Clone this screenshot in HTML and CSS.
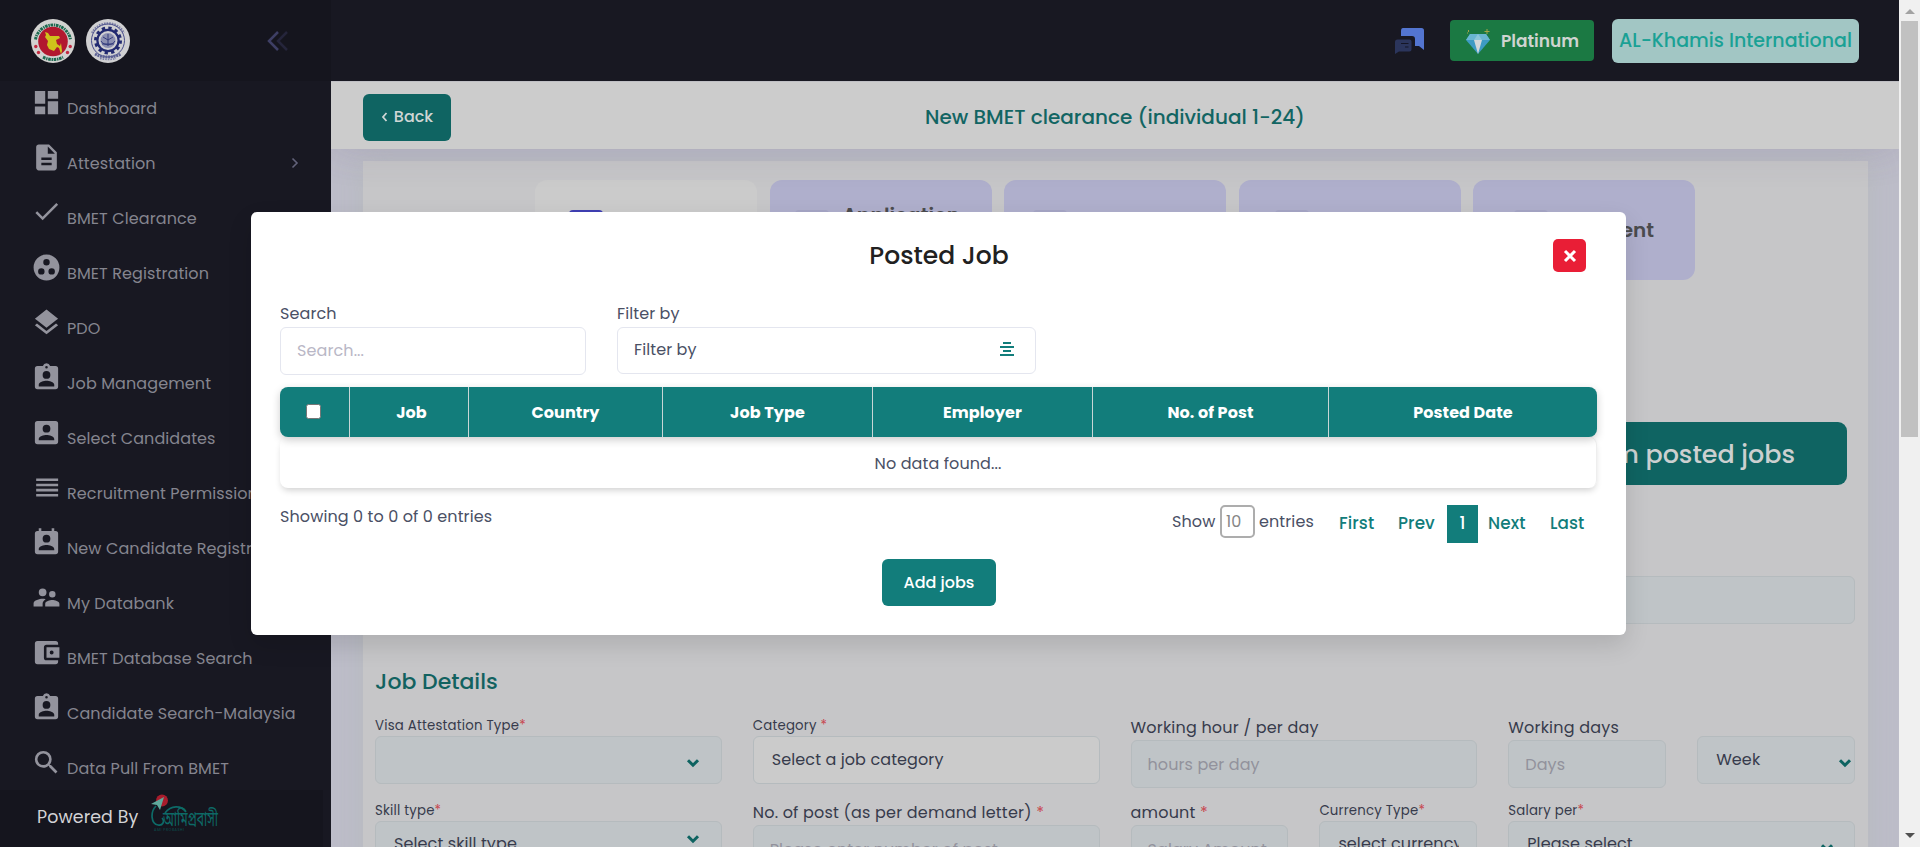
FILE: index.html
```html
<!DOCTYPE html>
<html lang="en">
<head>
<meta charset="utf-8">
<title>New BMET clearance</title>
<link rel="stylesheet" href="styles.css">
</head>
<body>
<svg width="0" height="0" class="defs">
  <symbol id="i-dash" viewBox="0 0 24 24"><path d="M3 13h8V3H3v10zm0 8h8v-6H3v6zm10 0h8V11h-8v10zm0-18v6h8V3h-8z"/></symbol>
  <symbol id="i-doc" viewBox="0 0 24 24"><path d="M14 2H6c-1.1 0-2 .9-2 2v16c0 1.100.9 2 2 2h12c1.100 0 2-.9 2-2V8l-6-6zm2 16H8v-2h8v2zm0-4H8v-2h8v2zm-3-5V3.500L18.500 9H13z"/></symbol>
  <symbol id="i-check" viewBox="0 0 24 24"><path d="M9 16.200L4.800 12l-1.400 1.400L9 19 21 7l-1.400-1.400L9 16.200z" transform="translate(0 -1)"/></symbol>
  <symbol id="i-group" viewBox="0 0 24 24"><path fill-rule="evenodd" d="M12 2a10 10 0 1 0 0 20 10 10 0 0 0 0-20zM8 17.500a2.500 2.500 0 1 1 0-5 2.500 2.500 0 0 1 0 5zM9.500 8a2.500 2.500 0 1 1 5 0 2.500 2.500 0 0 1-5 0zm6.500 9.500a2.500 2.500 0 1 1 0-5 2.500 2.500 0 0 1 0 5z"/></symbol>
  <symbol id="i-layers" viewBox="0 0 24 24"><path d="M11.990 18.540l-7.370-5.730L3 14.070l9 7 9-7-1.630-1.270-7.380 5.740zM12 16l7.360-5.730L21 9l-9-7-9 7 1.630 1.270L12 16z"/></symbol>
  <symbol id="i-badge" viewBox="0 0 24 24"><path fill-rule="evenodd" d="M19 3h-4.180a3 3 0 0 0-5.640 0H5a2 2 0 0 0-2 2v14a2 2 0 0 0 2 2h14a2 2 0 0 0 2-2V5a2 2 0 0 0-2-2zm-7 0a1 1 0 1 1 0 2 1 1 0 0 1 0-2zm0 4a3 3 0 1 1 0 6 3 3 0 0 1 0-6zm6 12H6v-1.400c0-2 4-3.100 6-3.100s6 1.100 6 3.100V19z"/></symbol>
  <symbol id="i-box" viewBox="0 0 24 24"><path fill-rule="evenodd" d="M5 3a2 2 0 0 0-2 2v14a2 2 0 0 0 2 2h14a2 2 0 0 0 2-2V5a2 2 0 0 0-2-2H5zm7 3a3 3 0 1 1 0 6 3 3 0 0 1 0-6zm6 12H6v-1c0-2 4-3.100 6-3.100s6 1.100 6 3.100v1z"/></symbol>
  <symbol id="i-lines" viewBox="0 0 24 24"><path d="M4 15h17v-2H4v2zm0 4h17v-2H4v2zm0-8h17V9H4v2zm0-6v2h17V5H4z"/></symbol>
  <symbol id="i-cal" viewBox="0 0 24 24"><path fill-rule="evenodd" d="M19 3h-1V1h-2v2H8V1H6v2H5a2 2 0 0 0-2 2v14a2 2 0 0 0 2 2h14a2 2 0 0 0 2-2V5a2 2 0 0 0-2-2zm-7 3a3 3 0 1 1 0 6 3 3 0 0 1 0-6zm6 12H6v-1c0-2 4-3.100 6-3.100s6 1.100 6 3.100v1z"/></symbol>
  <symbol id="i-people" viewBox="0 0 24 24"><path d="M16.500 12a2.500 2.500 0 1 0 0-5 2.500 2.500 0 0 0 0 5zM9 11a3 3 0 1 0 0-6 3 3 0 0 0 0 6zm7.500 3c-1.830 0-5.500.92-5.500 2.750V19h11v-2.250c0-1.830-3.670-2.750-5.500-2.750zM9 13c-2.330 0-7 1.170-7 3.500V19h7v-2.250c0-.85.33-2.340 2.370-3.470C10.500 13.100 9.660 13 9 13z"/></symbol>
  <symbol id="i-wallet" viewBox="0 0 24 24"><path fill-rule="evenodd" d="M21 18v1a2 2 0 0 1-2 2H5a2 2 0 0 1-2-2V5a2 2 0 0 1 2-2h14a2 2 0 0 1 2 2v1h-9a2 2 0 0 0-2 2v8a2 2 0 0 0 2 2h9zm-9-2h10V8H12v8zm4-2.500a1.500 1.500 0 1 1 0-3 1.500 1.500 0 0 1 0 3z"/></symbol>
  <symbol id="i-search" viewBox="0 0 24 24"><path d="M15.500 14h-.79l-.28-.27A6.470 6.470 0 0 0 16 9.500 6.500 6.500 0 1 0 9.500 16c1.610 0 3.090-.59 4.230-1.570l.27.28v.79l5 4.990L20.490 19l-4.990-5zm-6 0a4.500 4.500 0 1 1 0-9 4.500 4.500 0 0 1 0 9z"/></symbol>
  <symbol id="i-chev" viewBox="0 0 14 10"><path d="M2 2.200l5 5 5-5" fill="none" stroke="#0e6361" stroke-width="3"/></symbol>
</svg>

<div class="app">
  <aside class="side">
    <div class="brand">
      <svg class="seal" viewBox="0 0 44 44">
        <circle cx="22" cy="22" r="22" fill="#d2d2d0"/>
        <path d="M4.500 20.500A17.800 17.800 0 0 1 39.500 20.500" fill="none" stroke="#1c6a50" stroke-width="3" stroke-dasharray="2.600 .8 1.400 .7"/>
        <path d="M12 38.200Q22 43 32 38.200" fill="none" stroke="#1c6a50" stroke-width="3" stroke-dasharray="2.600 .8 1.400 .7"/>
        <circle cx="22" cy="22.500" r="14.800" fill="#b2182f"/>
        <path d="M14 13l3 1 2 3h9l1 2-4 2 1 4 3 2 1-3 1 8-1 3-2-6-2-1-3 4-5-2-2-4 1-4-3-4 1-2z" fill="#cfc31b"/>
        <g fill="#c22a40"><circle cx="4.800" cy="27.500" r="1.700"/><circle cx="7.500" cy="33.500" r="1.700"/><circle cx="39.200" cy="27.500" r="1.700"/><circle cx="36.500" cy="33.500" r="1.700"/></g>
      </svg>
      <svg class="seal" viewBox="0 0 44 44">
        <circle cx="22" cy="22" r="22" fill="#d0d0d2"/>
        <path d="M6 14A18 18 0 0 1 38 14" fill="none" stroke="#7b7fa6" stroke-width="2.200" stroke-dasharray="1.600 1"/>
        <circle cx="22" cy="21.500" r="16.500" fill="none" stroke="#474c8a" stroke-width="1"/>
        <circle cx="22" cy="21.500" r="12.500" fill="none" stroke="#222a70" stroke-width="3" stroke-dasharray="3.270 3.270"/>
        <circle cx="22" cy="21.500" r="10.600" fill="none" stroke="#222a70" stroke-width="2.200"/>
        <circle cx="22" cy="21.500" r="7.500" fill="#8c90b2"/>
        <path d="M15 22c3 5 11 5 14 0M17 18l5 3 5-3M22 15v12M16 25h12" fill="none" stroke="#343c7c" stroke-width="1"/>
        <path d="M9 35c8 4 18 4 26 0" fill="none" stroke="#5b6094" stroke-width="3" stroke-dasharray="2 .7"/>
        <path d="M14 39.500q8 2 16 0" fill="none" stroke="#7b7fa6" stroke-width="1.500" stroke-dasharray="1.600 1"/>
      </svg>
      <svg class="collapse" viewBox="0 0 22 20"><path d="M11 1L2 10l9 9" fill="none" stroke="#3e3f65" stroke-width="2.500"/><path d="M20 1l-9 9 9 9" fill="none" stroke="#25253b" stroke-width="2.500"/></svg>
    </div>
    <nav class="nav">
      <a class="item"><svg><use href="#i-dash"/></svg><span>Dashboard</span></a>
      <a class="item"><svg><use href="#i-doc"/></svg><span>Attestation</span><svg class="more" viewBox="0 0 8 12"><path d="M1.500 1.500L6 6l-4.500 4.500" fill="none" stroke="#62627a" stroke-width="1.600"/></svg></a>
      <a class="item"><svg><use href="#i-check"/></svg><span>BMET Clearance</span></a>
      <a class="item"><svg><use href="#i-group"/></svg><span>BMET Registration</span></a>
      <a class="item"><svg><use href="#i-layers"/></svg><span>PDO</span></a>
      <a class="item"><svg><use href="#i-badge"/></svg><span>Job Management</span></a>
      <a class="item"><svg><use href="#i-box"/></svg><span>Select Candidates</span></a>
      <a class="item"><svg><use href="#i-lines"/></svg><span>Recruitment Permission</span></a>
      <a class="item"><svg><use href="#i-cal"/></svg><span>New Candidate Registration</span></a>
      <a class="item"><svg><use href="#i-people"/></svg><span>My Databank</span></a>
      <a class="item"><svg><use href="#i-wallet"/></svg><span>BMET Database Search</span></a>
      <a class="item"><svg><use href="#i-badge"/></svg><span>Candidate Search-Malaysia</span></a>
      <a class="item"><svg><use href="#i-search"/></svg><span>Data Pull From BMET</span></a>
    </nav>
    <footer class="powered">
      <span>Powered By</span>
      <svg class="probashi" viewBox="0 0 68 40">
        <circle cx="11" cy="7.500" r="6" fill="#a81c2c"/>
        <path d="M0 11l13-7-4 13-3-5z" fill="#5fa99b"/>
        <path d="M5 13C-1 19 0 31 7 32c5 1 7-4 4-7M14 20c6-8 16-8 21-1" fill="none" stroke="#0d6a67" stroke-width="1.700"/>
        <text x="12" y="33" class="bn" textLength="55" lengthAdjust="spacingAndGlyphs">আমিপ্রবাসী</text>
        <text x="3" y="37.500" class="bn-sub" textLength="30">AMI PROBASHI</text>
      </svg>
    </footer>
  </aside>

  <div class="page">
    <header class="top">
      <svg class="chat" viewBox="0 0 29 26"><path d="M8 0h18.500Q29 0 29 2.500V22l-5-4h-4V11q0-3-3-3H6V3q0-3 2-3z" fill="#5375d0"/><path d="M2.500 11.500h12q2 0 2 2v8q0 2-2 2H4L0 26V14q0-2.500 2.500-2.500z" fill="#2b355c"/><path d="M6 15.500h7.500M10 19h3.500" stroke="#151626" stroke-width="1.200"/></svg>
      <button class="plat"><svg viewBox="0 0 26 26"><path d="M5 5h16l4 6-12 14L1 11z" fill="#3e9bc4"/><path d="M5 5h16l4 6H1z" fill="#69b6d2"/><path d="M9 11h8l-4 14z" fill="#d3d8da"/><path d="M9 11l4-6 4 6z" fill="#8cc6da"/><path d="M22 0v5M19.500 2.500h5M3.500 1v2M2 4h1" stroke="#a5a44a" stroke-width="1"/></svg><span>Platinum</span></button>
      <button class="agency">AL-Khamis International</button>
    </header>
    <div class="sub">
      <button class="back"><svg viewBox="0 0 7 10"><path d="M5.500 1L2 5l3.500 4" fill="none" stroke="#cfd6d5" stroke-width="1.800"/></svg><span>Back</span></button>
      <h1>New BMET clearance (individual 1-24)</h1>
    </div>
    <div class="body">
      <section class="card">
        <div class="steps">
          <div class="step on s1"><i></i></div>
          <div class="step s2"><i></i><b>Application</b></div>
          <div class="step s3"><i></i></div>
          <div class="step s4"><i></i></div>
          <div class="step s5"><i></i><b>Payment</b></div>
        </div>
        <button class="choose">Select from posted jobs</button>
        <div class="wide"></div>
        <h2>Job Details</h2>
        <div class="form">
          <div class="f"><label class="sm">Visa Attestation Type<em>*</em></label><div class="inp"><svg class="cv"><use href="#i-chev"/></svg></div></div>
          <div class="f"><label class="sm">Category <em>*</em></label><div class="inp white">Select a job category</div></div>
          <div class="f"><label>Working hour / per day</label><div class="inp ph">hours per day</div></div>
          <div class="pair">
            <div class="f"><label>Working days</label><div class="inp ph">Days</div></div>
            <div class="f nolabel"><div class="inp">Week<svg class="cv tight"><use href="#i-chev"/></svg></div></div>
          </div>
          <div class="f"><label class="sm">Skill type<em>*</em></label><div class="inp low">Select skill type<svg class="cv up"><use href="#i-chev"/></svg></div></div>
          <div class="f"><label>No. of post (as per demand letter) <em>*</em></label><div class="inp ph">Please enter number of post</div></div>
          <div class="pair">
            <div class="f"><label>amount <em>*</em></label><div class="inp ph">Salary Amount</div></div>
            <div class="f"><label class="sm">Currency Type<em>*</em></label><div class="inp low"><span class="clip">select currency</span></div></div>
          </div>
          <div class="f"><label class="sm">Salary per<em>*</em></label><div class="inp low">Please select<svg class="cv down"><use href="#i-chev"/></svg></div></div>
        </div>
      </section>
    </div>
  </div>

  <div class="scroll"><span class="arr-up"></span><span class="thumb"></span><span class="arr-dn"></span></div>
</div>

<div class="modal">
  <div class="m-head"><h3>Posted Job</h3><button class="close"><svg viewBox="0 0 14 14"><path d="M2 2l10 10M12 2L2 12" stroke="#fff" stroke-width="3"/></svg></button></div>
  <div class="filters">
    <div class="col-a"><label>Search</label><div class="box search">Search...</div></div>
    <div class="col-b"><label>Filter by</label><div class="box">Filter by<svg class="bars" viewBox="0 0 14 14"><path d="M3 1h8M0 5h14M3 9h8M0 13h14" stroke="#127d7b" stroke-width="2"/></svg></div></div>
  </div>
  <div class="t-head"><span><i class="cb"></i></span><span class="job">Job</span><span>Country</span><span>Job Type</span><span>Employer</span><span>No. of Post</span><span>Posted Date</span></div>
  <div class="t-row">No data found...</div>
  <div class="t-foot">
    <span class="showing">Showing 0 to 0 of 0 entries</span>
    <div class="pager">
      <span>Show</span><span class="num">10</span><span class="ent">entries</span>
      <a class="p-first">First</a><a class="p-prev">Prev</a><a class="cur">1</a><a class="p-next">Next</a><a class="p-last">Last</a>
    </div>
  </div>
  <button class="add">Add jobs</button>
</div>
</body>
</html>
```
FILE: styles.css
```css
* { box-sizing: border-box; }
body { margin: 0; height: 847px; overflow: hidden; font: 16px/24px Poppins, Inter, "Open Sans", sans-serif; letter-spacing: .1px; color: #4a5065; }
button { border: 0; padding: 0; font: inherit; display: flex; align-items: center; justify-content: center; white-space: nowrap; }
h1, h2, h3 { margin: 0; font-weight: 500; white-space: nowrap; letter-spacing: 0; }
svg { display: block; flex: none; }
.defs { position: absolute; }
.app { display: grid; grid-template-columns: 331px 1568px 21px; height: 847px; overflow: hidden; }

.side { background: #181822; display: flex; flex-direction: column; height: 847px; }
.brand { height: 81px; flex: none; background: #15151e; display: flex; align-items: center; padding: 0 42px 0 31px; gap: 11px; }
.seal { width: 44px; height: 44px; }
.collapse { width: 22px; height: 20px; margin-left: auto; }
.nav { flex: 1; min-height: 0; overflow: hidden; }
.item { display: flex; align-items: flex-start; height: 55px; padding: 6px 0 0 31px; color: #85858f; white-space: nowrap; }
.item svg { width: 31px; height: 31px; fill: #93939d; }
.item span { margin: 10px 0 0 5px; }
.item svg.more { width: 8px; height: 12px; fill: none; margin: 15px 32px 0 auto; }
.powered { height: 57px; width: 323px; flex: none; background: #15151e; display: flex; padding-left: 37px; color: #d3d3d6; font-size: 17.400px; }
.powered span { padding-top: 15px; width: 102px; white-space: nowrap; }
.probashi { width: 68px; height: 40px; margin: 3px 0 0 12px; }
.bn { font-size: 20px; fill: #0d6a67; letter-spacing: 0; font-family: "Noto Sans Bengali", "Noto Sans", sans-serif; }
.bn-sub { font-size: 3.500px; fill: #0b504f; }

.page { display: flex; flex-direction: column; height: 847px; overflow: hidden; }
.top { height: 81px; flex: none; background: #181822; display: flex; align-items: center; justify-content: flex-end; padding-right: 40px; position: relative; z-index: 2; }
.chat { width: 29px; height: 26px; margin-right: 26px; }
.plat { width: 144px; height: 41px; border-radius: 4px; background: #1b7943; color: #cfd4d0; font-weight: 600; font-size: 17px; gap: 10px; margin-right: 18px; }
.plat svg { width: 26px; height: 26px; margin-top: 2px; }
.agency { width: 247px; height: 44px; border-radius: 6px; background: #a2c6c4; color: #1aa195; font-size: 19px; font-weight: 500; }
.sub { height: 68px; flex: none; background: #ccc; border-top: 1px solid #bfbfc4; display: flex; align-items: center; padding: 4px 32px 0; position: relative; box-shadow: 0 0 40px rgba(82, 63, 105, .16); }
.back { width: 88px; height: 47px; margin-top: -1px; border-radius: 6px; background: #0f6462; color: #cfd6d5; font-weight: 500; gap: 6px; }
.back svg { width: 7px; height: 10px; }
.sub h1 { flex: 1; text-align: center; padding: 0 88px 2px 0; font-size: 20px; color: #126563; }
.body { flex: 1; min-height: 0; padding: 12px 31px 0 32px; background: #bdbdc9; }
.card { height: 900px; background: #c6c6c8; padding: 19px 13px 0 12px; box-shadow: 0 0 26px rgba(178, 186, 180, .5); }
.steps { display: grid; grid-template-columns: repeat(5, 222px); gap: 12.500px; justify-content: center; }
.step { height: 100px; border-radius: 12px; background: #afafcc; display: flex; align-items: center; gap: 14px; padding-left: 36px; color: #4b4b4e; font-size: 20px; line-height: 30px; letter-spacing: 0; }
.step.on { background: #cbcbcb; }
.step i { width: 34px; height: 40px; border-radius: 4px; background: #a6a6c5; }
.step.on i { background: #4040b4; }
.step b { font-weight: 600; }
.s1 { padding-left: 34px; }
.s2 { padding-left: 25px; }
.s2 b { align-self: flex-start; padding-top: 20px; }
.s3 { padding-left: 29px; }
.s5 { padding-left: 41px; }
.choose { height: 63px; width: 420px; margin: 142px 8px 0 auto; justify-content: flex-end; padding-right: 52px; border-radius: 9px; background: #0f6462; color: #ccd0d0; font-size: 25.400px; letter-spacing: 0; font-weight: 500; }
.wide { height: 48px; margin-top: 91px; border: 1px solid #b5bbbe; border-radius: 6px; background: #bfc4c7; }
.card h2 { margin: 43px 0 17px; font-size: 22px; line-height: 30px; color: #126260; }
.form { display: grid; grid-template-columns: repeat(4, 1fr); gap: 11px 31px; color: #373b4c; }
.pair { display: grid; grid-template-columns: 1fr 1fr; gap: 31px; }
.f { min-width: 0; }
.f label { display: block; height: 26px; line-height: 27px; white-space: nowrap; letter-spacing: .2px; }
.f label.sm { height: 22px; line-height: 23px; font-size: 13.300px; }
.f em { color: #c8474f; font-style: normal; }
.nolabel { padding-top: 22px; }
.inp { height: 48px; border: 1px solid #b5bbbe; border-radius: 6px; background: #bfc4c7; padding: 0 17px 0 18px; line-height: 46px; display: flex; white-space: nowrap; }
.inp.white { background: #cbcbcb; }
.inp.ph { color: #92929c; padding: 0 16px; line-height: 48px; }
.low { line-height: 44px; }
.clip { overflow: hidden; height: 44px; width: 122px; }
.cv { width: 14px; height: 10px; margin: 21px 4px 0 auto; }
.cv.tight { margin-right: -15px; }
.cv.up { margin-top: 12px; }
.cv.down { margin-top: 21px; margin-right: 3px; }

.scroll { background: #f0f0f0; display: flex; flex-direction: column; align-items: center; }
.arr-up { border: 5px solid transparent; border-bottom-color: #a3a3a3; border-top: 0; margin: 9px 0 7px; }
.thumb { width: 17px; height: 416px; background: #c1c1c1; }
.arr-dn { border: 5px solid transparent; border-top: 5px solid #505050; border-bottom: 0; margin: auto 0 9px; }

.modal { position: absolute; left: 251px; top: 212px; width: 1375px; height: 423px; background: #fff; border-radius: 6px; padding: 27px 29px 0; box-shadow: 0 10px 24px rgba(0, 0, 0, .12); }
.m-head { display: flex; align-items: flex-start; height: 34px; padding-right: 11px; }
.m-head h3 { flex: 1; text-align: center; padding-left: 12px; line-height: 34px; font-size: 25px; color: #212121; }
.close { width: 33px; height: 33px; border-radius: 5px; background: #e91e36; margin-left: -33px; }
.close svg { width: 14px; height: 14px; }
.filters { display: flex; gap: 31px; margin-top: 28px; }
.filters label { display: block; height: 26px; line-height: 26px; }
.col-a { width: 306px; }
.col-b { width: 419px; }
.box { height: 47px; border: 1px solid #e4e6ef; border-radius: 6px; padding: 0 16px; line-height: 44px; display: flex; }
.search { height: 48px; color: #b9b7c6; line-height: 46px; }
.bars { width: 14px; height: 14px; margin: 14px 5px 0 auto; }
.t-head { display: grid; grid-template-columns: 70px 119px 194px 210px 220px 236px 268px; height: 50px; margin-top: 12px; border-radius: 8px; background: #127d7b; color: #fff; font-weight: 700; box-shadow: 0 3px 8px rgba(0, 0, 0, .2); position: relative; }
.t-head span { border-right: 1px solid #c8d6d6; display: flex; align-items: center; justify-content: center; padding-top: 1px; }
.t-head span:last-child { border: 0; }
.t-head .job { padding-left: 5px; }
.cb { width: 15px; height: 15px; border: 1px solid #767676; border-radius: 2.500px; background: #fff; margin: -3px 3px 0 0; }
.t-row { height: 51px; border-radius: 8px; border-right: 1px solid #eee; text-align: center; line-height: 53px; box-shadow: 0 4px 7px -2px rgba(0, 0, 0, .2); }
.t-foot { display: flex; justify-content: space-between; margin-top: 17px; height: 38px; }
.showing { line-height: 24px; }
.pager { display: flex; line-height: 34px; }
.pager span { width: 48px; }
.pager .num { width: 35px; height: 33px; border: 2px solid #adadad; border-radius: 5px; color: #868686; line-height: 29px; padding-left: 4px; }
.pager .ent { margin-left: 4px; width: 80px; }
.pager a { color: #127d7b; font-weight: 500; font-size: 16.800px; line-height: 37px; height: 38px; }
.p-first { width: 59px; }
.p-prev { width: 49px; }
.pager a.cur { background: #127d7b; color: #fff; width: 31px; text-align: center; }
.p-next { width: 62px; margin-left: 10px; }
.p-last { width: 47px; }
.add { width: 114px; height: 47px; margin: 16px 0 0 602px; border-radius: 6px; background: #127d7b; color: #fff; font-weight: 500; }
```
